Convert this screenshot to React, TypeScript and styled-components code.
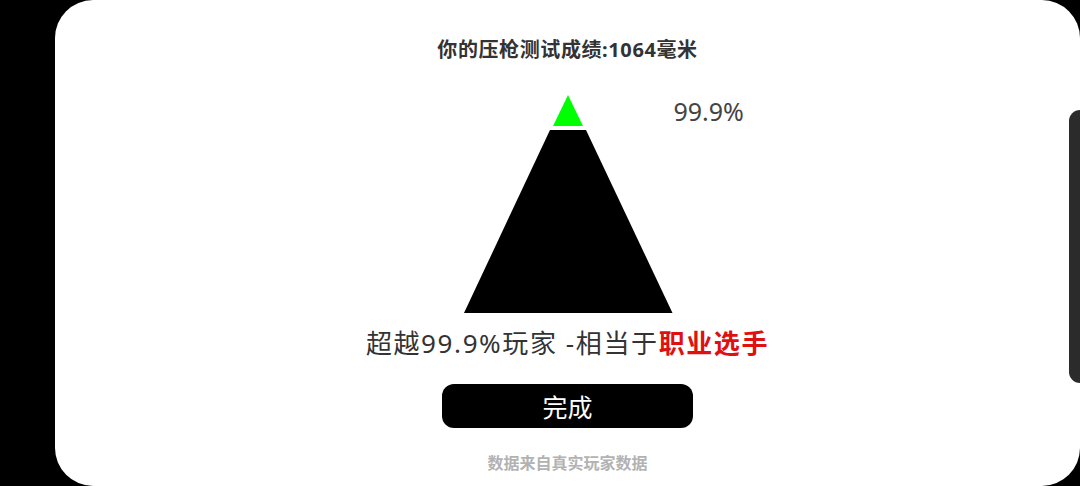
import React from 'react';
import styled, { createGlobalStyle } from 'styled-components';

const GlobalStyle = createGlobalStyle`
  html, body {
    margin: 0;
    padding: 0;
    background: #000;
  }
  body {
    font-family: "Noto Sans", "Noto Sans CJK SC", sans-serif;
  }
`;

const Screen = styled.div`
  position: relative;
  width: 1080px;
  height: 486px;
  padding-left: 55px;
  box-sizing: border-box;
  display: flex;
  overflow: hidden;
  background: #000;
`;

const Card = styled.div`
  flex: 1;
  background: #fff;
  border-radius: 38px;
  display: flex;
  flex-direction: column;
  align-items: center;
  padding-top: 36px;
  box-sizing: border-box;
`;

const Title = styled.div`
  font-size: 20px;
  line-height: 28px;
  font-weight: 700;
  letter-spacing: 0.6px;
  color: #333;
`;

const ChartRow = styled.div`
  margin-top: 31px;
  width: 100%;
  display: grid;
  grid-template-columns: 1fr 210px 1fr;
`;

const Pyramid = styled.svg`
  grid-column: 2;
  display: block;
`;

const Percent = styled.div`
  grid-column: 3;
  align-self: start;
  padding: 3px 0 0 1px;
  font-size: 25px;
  line-height: 26px;
  color: #444;
`;

const Result = styled.div`
  margin-top: 12px;
  font-size: 26px;
  line-height: 36px;
  letter-spacing: 1.6px;
  color: #333;
  white-space: pre;
`;

const Rank = styled.span`
  color: #e01010;
  font-weight: 700;
`;

const DoneButton = styled.button`
  margin-top: 23px;
  width: 251px;
  height: 44px;
  border: none;
  border-radius: 12px;
  background: #000;
  color: #fff;
  font-family: "Noto Sans CJK SC", sans-serif;
  font-size: 25px;
  cursor: pointer;
`;

const Footer = styled.div`
  margin-top: 24px;
  font-size: 16px;
  line-height: 22px;
  font-weight: 700;
  color: #b2b2b2;
`;

const SideHandle = styled.div`
  position: absolute;
  right: 0;
  top: 110px;
  width: 11px;
  height: 273px;
  background: #2b2b2b;
  border-radius: 11px 0 0 11px;
`;

const App: React.FC = () => (
  <Screen>
    <GlobalStyle />
    <Card>
      <Title>你的压枪测试成绩:1064毫米</Title>
      <ChartRow>
        <Pyramid width="210" height="218" viewBox="0 0 210 218">
          <polygon points="105,0 90,31 120,31" fill="#00ff00" />
          <polygon points="87,35 123,35 209.5,218 1,218" fill="#000" />
        </Pyramid>
        <Percent>99.9%</Percent>
      </ChartRow>
      <Result>
        超越99.9%玩家 -相当于<Rank>职业选手</Rank>
      </Result>
      <DoneButton>完成</DoneButton>
      <Footer>数据来自真实玩家数据</Footer>
    </Card>
    <SideHandle />
  </Screen>
);

export default App;
